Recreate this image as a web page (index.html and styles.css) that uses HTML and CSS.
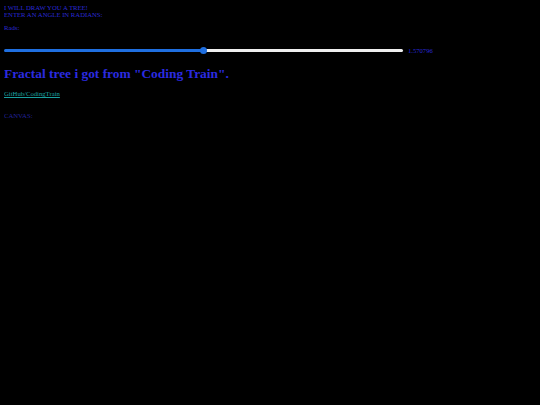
FILE: index.html
```html
<!DOCTYPE html>
<html>
<head>
<meta charset="utf-8">
<link rel="stylesheet" href="styles.css">
</head>
<body>
<div class="intro">I WILL DRAW YOU A TREE!<br>ENTER AN ANGLE IN RADIANS:</div>
<div class="rads">Rads:</div>
<div class="slider-row">
  <input class="slider" type="range" min="0" max="3.141592" step="0.000001" value="1.570796">
  <span class="value">1.570796</span>
</div>
<h1 class="title">Fractal tree i got from "Coding Train".</h1>
<a class="link" href="#">GitHub/CodingTrain</a>
<div class="canvas-label">CANVAS:</div>
</body>
</html>
```
FILE: styles.css
```css
html, body {
  background: #000;
}
body {
  margin: 4px;
  font-family: "Liberation Serif", "Times New Roman", serif;
  font-size: 6.7px;
  line-height: 7px;
  color: #2a2ad6;
}
.intro {
  margin-top: 0;
}
.rads {
  margin-top: 6px;
}
.slider-row {
  display: flex;
  align-items: center;
  gap: 5px;
  margin-top: 16px;
}
.slider {
  -webkit-appearance: none;
  appearance: none;
  width: 399px;
  height: 3px;
  margin: 0;
  border-radius: 2px;
  background: linear-gradient(to right, #1f6fe0 0%, #1f6fe0 50%, #efefef 50%, #efefef 100%);
  outline: none;
}
.slider::-webkit-slider-thumb {
  -webkit-appearance: none;
  appearance: none;
  width: 7px;
  height: 7px;
  border-radius: 50%;
  background: #1f6fe0;
  border: none;
}
.value {
  font-size: 6.6px;
  color: #2a2ad6;
}
.title {
  margin: 12px 0 0 0;
  font-size: 13.4px;
  line-height: 15px;
  font-weight: bold;
  color: #2b2be0;
}
.link {
  display: block;
  margin-top: 9px;
  width: max-content;
  color: #1aa0a0;
}
.canvas-label {
  margin-top: 15px;
  color: #22229a;
}
```
